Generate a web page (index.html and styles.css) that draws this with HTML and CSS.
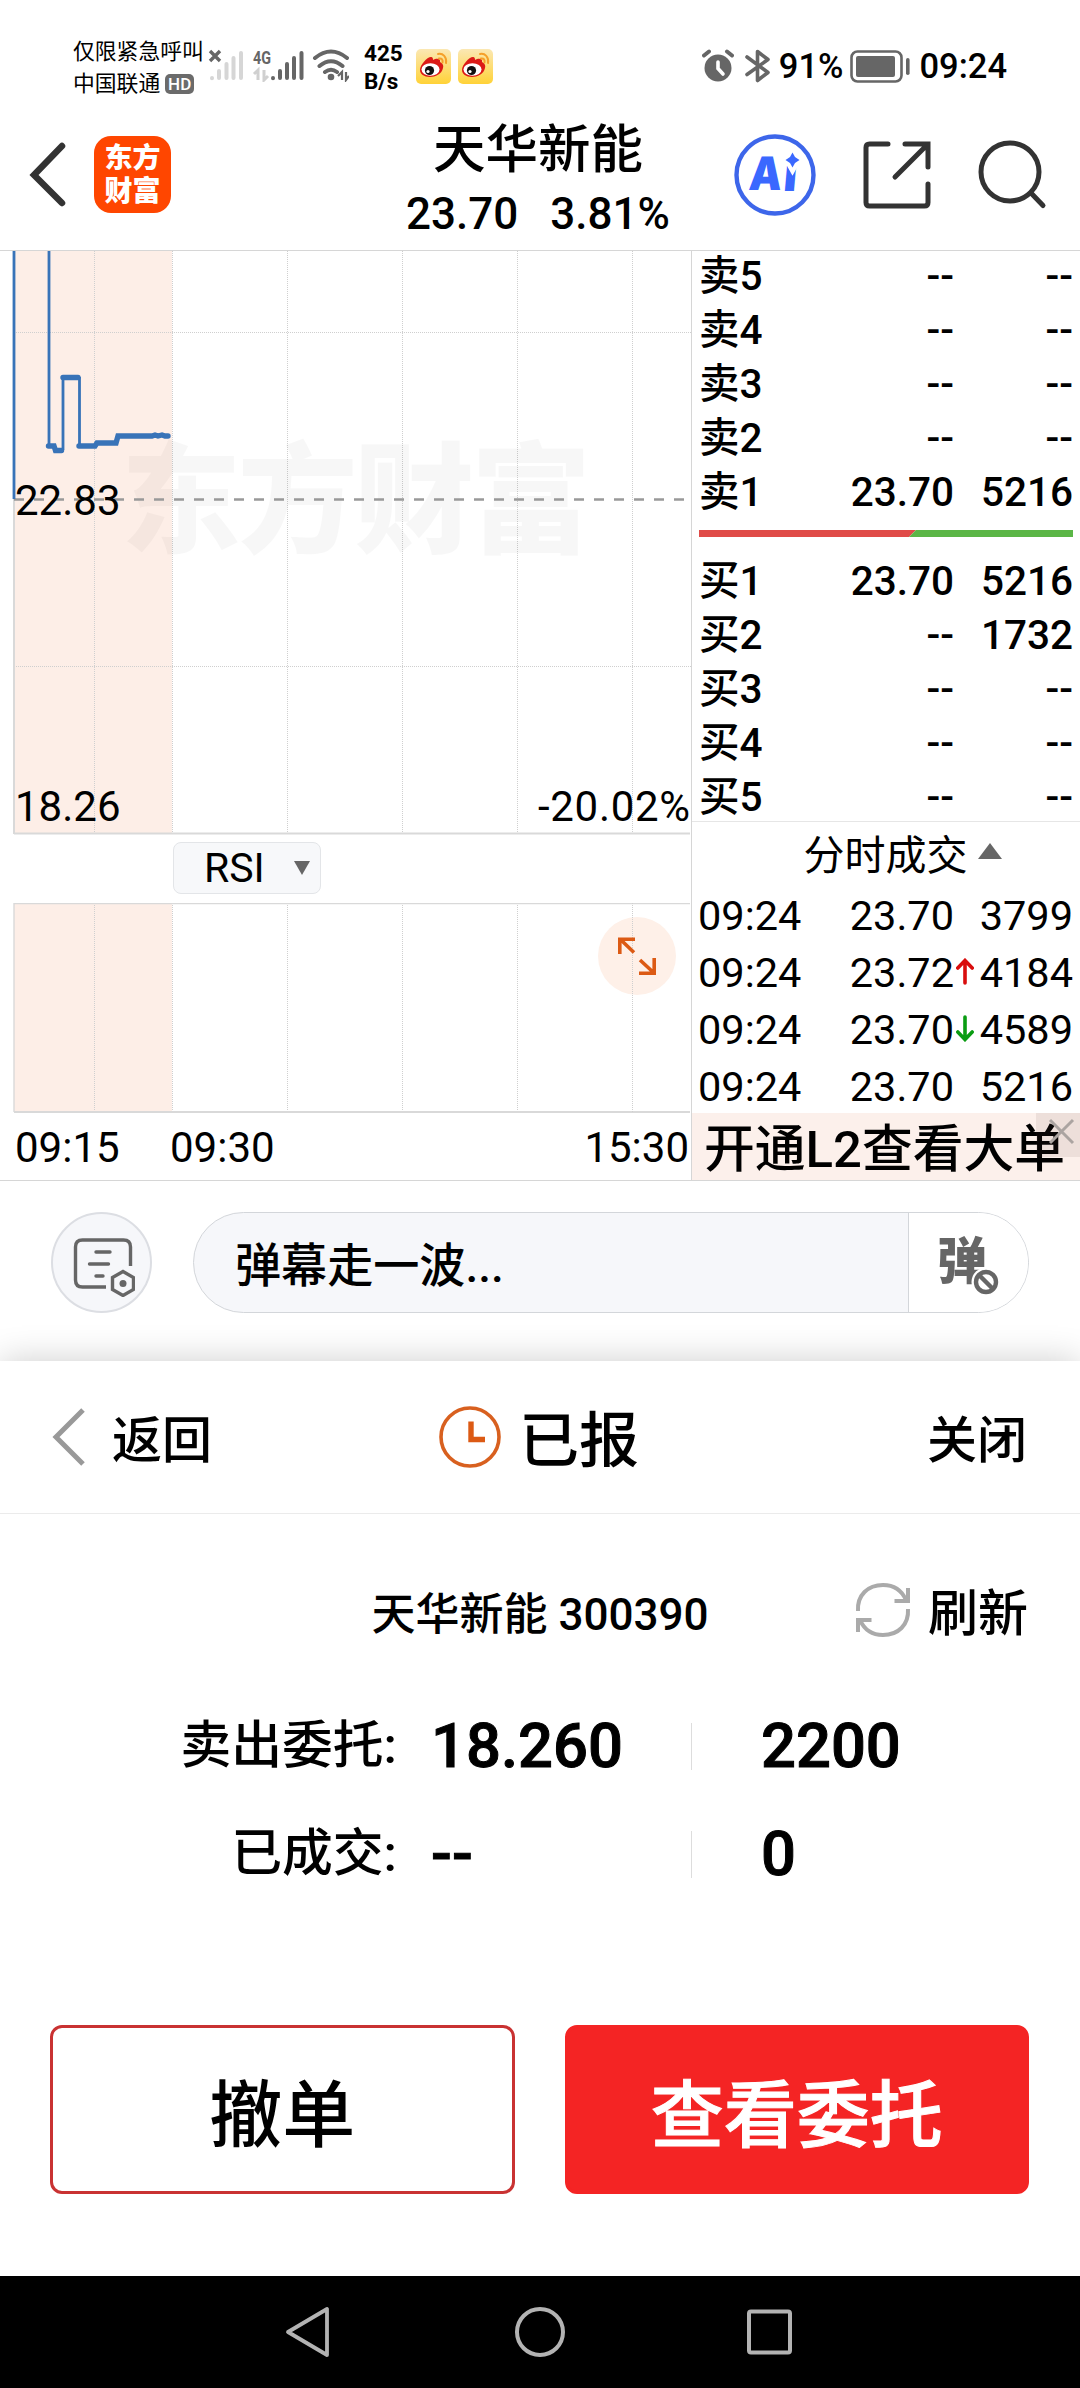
FILE: index.html
```
<!doctype html>
<html lang="zh-CN">
  <head>
    <meta charset="UTF-8" />
    <title>天华新能 300390</title>
    <link rel="stylesheet" href="styles.css">
  </head>
  <body>
    <!-- status bar -->
    <div class="status-bar">
      <div class="carrier">
        <p>仅限紧急呼叫</p>
        <p>中国联通<span class="hd">HD</span></p>
      </div>
      <svg class="signals" width="144" height="34" viewBox="0 0 144 34">
        <g stroke="#666" stroke-width="3.4">
          <path d="M5 3l10 10M15 3L5 13"/>
        </g>
        <g stroke="#d6d6d6" stroke-width="4" stroke-linecap="round">
          <path d="M7 30v.2M14 23v7M21.500 16v14M28.500 10v20M36 5v25"/>
        </g>
        <text x="48" y="16" class="net" textLength="18" lengthAdjust="spacingAndGlyphs">4G</text>
        <path d="M49 26l4-4v10M59 22v10l4-4" fill="none" stroke="#d0d0d0" stroke-width="3"/>
        <g stroke="#666" stroke-width="4" stroke-linecap="round">
          <path d="M68 30v.2M75 23v7M82 16v14M89 10v20M96.500 5v25"/>
        </g>
        <g fill="none" stroke="#666" stroke-width="4" stroke-linecap="round">
          <path d="M110 10q16-13 32 0M114.500 18q11.500-9.500 23 0M120 24q6-4.500 12 0"/>
        </g>
        <circle cx="126" cy="29" r="3.300" fill="#666"/>
        <path d="M133 28l4-4v8M141 24v8l3-4" fill="none" stroke="#666" stroke-width="2.200"/>
      </svg>
      <div class="speed"><p>425</p><p>B/s</p></div>
      <svg class="weibo" width="35" height="35" viewBox="0 0 35 35">
        <defs>
          <linearGradient id="wb" x1="0" y1="0" x2="0" y2="1">
            <stop offset="0" stop-color="#fbe8b4"/><stop offset="1" stop-color="#ffd237"/>
          </linearGradient>
        </defs>
        <rect width="35" height="35" rx="5" fill="url(#wb)"/>
        <path d="M4 21c0-5 7-13 11-13 2 0 2 2 2 3 3-2 8-2 7 2 2 1 4 3 3 6-1 6-8 9-13 9-6 0-10-3-10-7z" fill="#dc1a16"/>
        <ellipse cx="14.500" cy="20.500" rx="9" ry="6.200" fill="#fff"/>
        <circle cx="13.500" cy="21.500" r="4.600" fill="#111"/>
        <circle cx="12" cy="22.500" r="1.600" fill="#fff"/>
        <path d="M22 5c5-1 9 3 8 9M23 9.500c3-.5 4 1.500 3.500 4" fill="none" stroke="#f5a02a" stroke-width="2" stroke-linecap="round"/>
      </svg>
      <svg class="weibo" width="35" height="35" viewBox="0 0 35 35">
        <rect width="35" height="35" rx="5" fill="url(#wb)"/>
        <path d="M4 21c0-5 7-13 11-13 2 0 2 2 2 3 3-2 8-2 7 2 2 1 4 3 3 6-1 6-8 9-13 9-6 0-10-3-10-7z" fill="#dc1a16"/>
        <ellipse cx="14.500" cy="20.500" rx="9" ry="6.200" fill="#fff"/>
        <circle cx="13.500" cy="21.500" r="4.600" fill="#111"/>
        <circle cx="12" cy="22.500" r="1.600" fill="#fff"/>
        <path d="M22 5c5-1 9 3 8 9M23 9.500c3-.5 4 1.500 3.500 4" fill="none" stroke="#f5a02a" stroke-width="2" stroke-linecap="round"/>
      </svg>
      <div class="status-right">
        <svg width="32" height="34" viewBox="0 0 32 34">
          <circle cx="16" cy="19" r="13.500" fill="#666"/>
          <path d="M2 6.500l5-4M30 6.500l-5-4" stroke="#666" stroke-width="4" stroke-linecap="round"/>
          <path d="M16 13v6.500l5 5.500" fill="none" stroke="#fff" stroke-width="3.600" stroke-linecap="round"/>
        </svg>
        <svg class="bt" width="26" height="34" viewBox="0 0 26 34">
          <path d="M2 8l21 15.500-10.500 8v-29l10.500 8L2 25.500" fill="none" stroke="#666" stroke-width="3.600" stroke-linecap="round" stroke-linejoin="round"/>
        </svg>
        <span class="percent">91%</span>
        <svg class="battery" width="60" height="33" viewBox="0 0 60 33">
          <rect x="1.500" y="1.500" width="50" height="30" rx="6" fill="none" stroke="#666" stroke-width="2.600"/>
          <rect x="6" y="6" width="39" height="21" rx="2" fill="#666"/>
          <rect x="56" y="8" width="3.600" height="17" rx="1.800" fill="#666"/>
        </svg>
        <span>09:24</span>
      </div>
    </div>

    <!-- stock header -->
    <div class="header">
      <div class="header-left">
        <svg width="40" height="66" viewBox="0 0 40 66">
          <path d="M34 4L6 33l28 28" fill="none" stroke="#333" stroke-width="6.500" stroke-linecap="round"/>
        </svg>
        <div class="logo"><span>东方</span><span>财富</span></div>
      </div>
      <div class="stock">
        <div class="stock-name">天华新能</div>
        <div class="stock-price"><span>23.70</span><span>3.81%</span></div>
      </div>
      <div class="actions">
        <svg width="82" height="82" viewBox="0 0 82 82">
          <circle cx="41" cy="41" r="38.500" fill="none" stroke="#3d66ea" stroke-width="4.400"/>
          <g transform="translate(0 56) skewX(-5)">
            <text x="14" y="0" class="ai" textLength="33" lengthAdjust="spacingAndGlyphs">A</text>
            <text x="48.500" y="1" class="ai">i</text>
          </g>
          <path d="M58.500 18.500l2.500 4.500 4.500 3-4.500 3-2.500 4.500-2.500-4.500-4.500-3 4.500-3z" fill="#3a68ff" stroke="#fff" stroke-width="8" paint-order="stroke"/>
        </svg>
        <svg width="68" height="68" viewBox="0 0 68 68">
          <path d="M25 3H6.500Q3 3 3 6.500v55Q3 65 6.500 65h55Q65 65 65 61.500V43M42 3h23v23M64 4L32 36" fill="none" stroke="#333" stroke-width="5" stroke-linecap="round"/>
        </svg>
        <svg width="70" height="70" viewBox="0 0 70 70">
          <circle cx="32" cy="32" r="29" fill="none" stroke="#333" stroke-width="5"/>
          <path d="M53 53l12 12.500" stroke="#333" stroke-width="5" stroke-linecap="round"/>
        </svg>
      </div>
    </div>

    <!-- chart and order book -->
    <div class="market">
      <div class="chart">
        <svg width="691" height="584" viewBox="0 251 691 584">
          <rect x="14" y="251" width="158" height="582" class="pre"/>
          <g class="grid">
            <path d="M94.500 251v582M172.500 251v582M287.500 251v582M402.500 251v582M517.500 251v582M632.500 251v582"/>
            <path d="M14 332.500h677M14 666.500h677"/>
          </g>
          <text x="121" y="544" class="watermark" textLength="470">东方财富</text>
          <path d="M14 251v583" class="axis"/>
          <path d="M14 833.500h676" class="axis"/>
          <path d="M14 499.500h676" class="mid"/>
          <path d="M14 251v248M49 251v195M63 450V377M79.500 377v69" class="line"/>
          <path d="M48.500 446h5.500l1.500 4.500h6M63 377.500h15M79 446h16l2-3h19l2-7h34l3-1 3 1 4-1 3 1h3" class="line dots"/>
          <text x="15" y="515" class="label">22.83</text>
          <text x="15" y="821" class="label">18.26</text>
          <text x="690" y="821" class="label" text-anchor="end" textLength="152">-20.02%</text>
        </svg>
        <div class="indicator">
          <div class="select">RSI<i class="caret"></i></div>
        </div>
        <svg width="691" height="211" viewBox="0 903 691 211">
          <rect x="14" y="903" width="158" height="209" class="pre"/>
          <g class="grid">
            <path d="M94.500 903v209M172.500 903v209M287.500 903v209M402.500 903v209M517.500 903v209"/>
          </g>
          <path d="M14 903v209M14 903.500h676" class="axis thin"/>
          <path d="M14 1112h676" class="axis"/>
          <circle cx="637" cy="956" r="39" fill="#fef0e8"/>
          <path d="M632.500 903v209" class="grid"/>
          <g fill="none" stroke="#dc5a14" stroke-width="3.600">
            <path d="M634 952.500L620 939M635 939.200h-15.200V954M640 960l14 13M639 973.200h15.200V958"/>
          </g>
        </svg>
        <div class="times"><span>09:15</span><span>09:30</span><span class="end">15:30</span></div>
      </div>

      <div class="book">
        <div class="asks">
          <div class="row"><span>卖5</span><span>--</span><span>--</span></div>
          <div class="row"><span>卖4</span><span>--</span><span>--</span></div>
          <div class="row"><span>卖3</span><span>--</span><span>--</span></div>
          <div class="row"><span>卖2</span><span>--</span><span>--</span></div>
          <div class="row"><span>卖1</span><span>23.70</span><span>5216</span></div>
        </div>
        <svg class="ratio" width="374" height="7" viewBox="0 0 374 7">
          <path d="M0 0h217l-7 7H0z" fill="#e04b48"/>
          <path d="M217 0h157v7H210z" fill="#5bb646"/>
        </svg>
        <div class="bids">
          <div class="row"><span>买1</span><span>23.70</span><span>5216</span></div>
          <div class="row"><span>买2</span><span>--</span><span>1732</span></div>
          <div class="row"><span>买3</span><span>--</span><span>--</span></div>
          <div class="row"><span>买4</span><span>--</span><span>--</span></div>
          <div class="row"><span>买5</span><span>--</span><span>--</span></div>
        </div>
        <div class="ticks-title">分时成交<i class="caret-up"></i></div>
        <div class="ticks">
          <div class="tick"><span>09:24</span><span>23.70</span><i></i><span>3799</span></div>
          <div class="tick">
            <span>09:24</span><span>23.72</span>
            <svg width="18" height="27" viewBox="0 0 18 27"><path d="M9 25V3M1.800 10L9 2.500l7.200 7.500" fill="none" stroke="#d90d0d" stroke-width="3.600" stroke-linecap="round"/></svg>
            <span>4184</span>
          </div>
          <div class="tick">
            <span>09:24</span><span>23.70</span>
            <svg width="18" height="27" viewBox="0 0 18 27"><path d="M9 2v22M1.800 17L9 24.500l7.200-7.500" fill="none" stroke="#0a9c12" stroke-width="3.600" stroke-linecap="round"/></svg>
            <span>4589</span>
          </div>
          <div class="tick"><span>09:24</span><span>23.70</span><i></i><span>5216</span></div>
        </div>
        <div class="banner">
          开通L2查看大单
          <svg class="banner-close" width="44" height="44" viewBox="0 0 44 44">
            <path d="M14 7l23 23M37 7L14 30" stroke="#aba4a1" stroke-width="3"/>
          </svg>
        </div>
      </div>
    </div>

    <!-- danmu input -->
    <div class="danmu">
      <div class="danmu-set">
        <svg width="62" height="60" viewBox="0 0 62 60">
          <g fill="none" stroke="#666" stroke-width="3.400">
            <path d="M33 50H9.500Q2.500 50 2.500 43V10Q2.500 3 9.500 3h41Q57.500 3 57.500 10v19"/>
            <path d="M23 15h14M16.500 27h19M23 39h7" stroke-linecap="round"/>
            <path d="M50 34.500l10.500 6v12L50 58.500l-10.500-6v-12z"/>
          </g>
          <circle cx="50" cy="46.500" r="3.500" fill="#666"/>
        </svg>
      </div>
      <div class="danmu-box">
        <div class="danmu-text">弹幕走一波...</div>
        <div class="danmu-off">
          <span>弹</span>
          <svg width="30" height="30" viewBox="0 0 30 30">
            <circle cx="15" cy="15" r="14.500" fill="#fff"/>
            <circle cx="15" cy="15" r="10" fill="#fff" stroke="#666" stroke-width="4.400"/>
            <path d="M8 8l14 14" stroke="#666" stroke-width="4.400"/>
          </svg>
        </div>
      </div>
    </div>

    <!-- order sheet -->
    <div class="sheet">
      <div class="sheet-head">
        <div class="sheet-back">
          <svg width="36" height="60" viewBox="0 0 36 60">
            <path d="M32 3L5 30l27 27" fill="none" stroke="#999" stroke-width="5"/>
          </svg>
          <span>返回</span>
        </div>
        <div class="sheet-title">
          <svg width="62" height="62" viewBox="0 0 62 62">
            <circle cx="31" cy="31" r="29" fill="none" stroke="#d8601f" stroke-width="3.600"/>
            <path d="M32 15.500v18h14" fill="none" stroke="#dc5a14" stroke-width="5.400"/>
          </svg>
          <span>已报</span>
        </div>
        <span class="sheet-close">关闭</span>
      </div>
      <div class="sheet-stock">
        <span class="code">天华新能 300390</span>
        <div class="refresh">
          <svg width="56" height="56" viewBox="0 0 56 56">
            <g fill="none" stroke="#aaa" stroke-width="4">
              <path d="M3 29C2 13 13 3 28 3c11 0 19 6 23 15M39.500 19H53V6"/>
              <path d="M53 27c1 16-10 26-25 26C17 53 9 47 5 38M16.500 38H3v12"/>
            </g>
          </svg>
          <span>刷新</span>
        </div>
      </div>
      <div class="detail">
        <span class="name">卖出委托:</span><b>18.260</b><i></i><b>2200</b>
      </div>
      <div class="detail">
        <span class="name">已成交:</span><b>--</b><i></i><b>0</b>
      </div>
      <div class="buttons">
        <button class="cancel">撤单</button>
        <button class="view">查看委托</button>
      </div>
    </div>

    <!-- system navigation -->
    <div class="nav">
      <svg width="50" height="54" viewBox="0 0 50 54">
        <path d="M43 4v46L4 27z" fill="none" stroke="#b3b3b3" stroke-width="3.800" stroke-linejoin="round"/>
      </svg>
      <svg width="54" height="54" viewBox="0 0 54 54">
        <circle cx="27" cy="27" r="23" fill="none" stroke="#b3b3b3" stroke-width="4"/>
      </svg>
      <svg width="50" height="54" viewBox="0 0 50 54">
        <rect x="3" y="6.500" width="41" height="41" rx="2" fill="none" stroke="#b3b3b3" stroke-width="4"/>
      </svg>
    </div>
  </body>
</html>
```
FILE: styles.css
```
* {
  box-sizing: border-box;
}
body {
  margin: 0;
  width: 1080px;
  height: 2388px;
  display: flex;
  flex-direction: column;
  overflow: hidden;
  background: #fff;
  color: #000;
  font-family: Roboto, "Noto Sans CJK SC", sans-serif;
  font-weight: 500;
}
p {
  margin: 0;
}
svg {
  display: block;
  flex: none;
}

/* status bar */
.status-bar {
  height: 125px;
  padding: 0 73px 0 73px;
  display: flex;
  align-items: flex-start;
}
.carrier {
  width: 132px;
  padding-top: 36px;
  font-size: 21.8px;
  font-weight: 400;
  line-height: 32px;
  white-space: nowrap;
}
.carrier p {
  display: flex;
  align-items: center;
}
.hd {
  width: 29px;
  height: 20px;
  margin-left: 5px;
  border-radius: 5px;
  background: #6b6b6b;
  color: #fff;
  font-size: 17px;
  font-weight: 500;
  line-height: 20px;
  text-align: center;
}
.signals {
  margin: 48px 4px 0 0;
}
.net {
  font-size: 19px;
  font-weight: 700;
  fill: #666;
}
.speed {
  width: 53px;
  padding: 40px 0 0 11px;
  font-size: 22.5px;
  line-height: 27.5px;
  font-weight: 700;
}
.weibo {
  margin: 49px 0 0 10px;
}
.weibo + .weibo {
  margin-left: 7px;
}
.status-right {
  margin-left: auto;
  padding-top: 49px;
  display: flex;
  align-items: center;
  font-size: 34.5px;
  line-height: 34px;
}
.bt {
  margin: 0 8px 0 11px;
}
.battery {
  margin: 0 9px 0 7px;
}

/* stock header */
.header {
  height: 125px;
  padding: 0 32px 0 28px;
  display: grid;
  grid-template-columns: 1fr 270px 1fr;
  align-items: start;
}
.header-left {
  display: flex;
  align-items: center;
  gap: 26px;
  padding-top: 11px;
}
.logo {
  width: 77px;
  height: 77px;
  padding-top: 6px;
  border-radius: 17px;
  background: #ff4600;
  color: #fff;
  font-size: 28px;
  font-weight: 900;
  line-height: 33px;
  text-align: center;
}
.logo span {
  display: block;
}
.stock {
  text-align: center;
}
.stock-name {
  margin-top: -6px;
  font-size: 52.5px;
  line-height: 62px;
}
.stock-price {
  display: flex;
  justify-content: center;
  gap: 32px;
  margin-top: 7px;
  font-size: 44px;
  line-height: 52px;
}
.actions {
  display: flex;
  justify-content: flex-end;
  align-items: center;
  gap: 47px;
  margin-top: 9px;
}
.ai {
  font-family: Inter, Roboto, sans-serif;
  font-size: 46px;
  font-weight: 900;
  fill: #3a68ff;
}

/* chart */
.market {
  height: 931px;
  display: flex;
  border-top: 1px solid #d6d6d6;
  border-bottom: 1px solid #d6d6d6;
}
.chart {
  width: 691px;
}
.pre {
  fill: #fdeee7;
}
.grid {
  fill: none;
  stroke: #cfcfcf;
  stroke-width: 1;
  stroke-dasharray: 1 1;
}
.axis {
  stroke: #d9d9d9;
  stroke-width: 2;
}
.thin {
  stroke-width: 1.4;
  fill: none;
}
.mid {
  stroke: #999;
  stroke-width: 2.4;
  stroke-dasharray: 10 10;
}
.line {
  fill: none;
  stroke: #3873b8;
  stroke-width: 2.8;
}
.dots {
  stroke-width: 5.4;
  stroke-linecap: round;
}
.label {
  font-size: 42px;
  font-weight: 400;
}
.watermark {
  font-size: 120px;
  font-weight: 900;
  fill: rgba(0, 0, 0, 0.03);
}
.indicator {
  height: 68px;
  padding: 7px 0 0 173px;
}
.select {
  width: 148px;
  height: 52px;
  padding-left: 30px;
  border: 1px solid #e3e5e8;
  border-radius: 8px;
  background: #f7f8fa;
  display: flex;
  align-items: center;
  font-size: 41px;
  font-weight: 400;
  line-height: 50px;
}
.caret {
  margin-left: 29px;
  border: solid transparent;
  border-width: 14px 8.5px 0;
  border-top-color: #666;
}
.times {
  display: flex;
  padding: 9px 2px 0 15px;
  font-size: 42px;
  font-weight: 400;
  line-height: 50px;
}
.times span {
  width: 155px;
}
.times .end {
  width: auto;
  margin-left: auto;
}

/* order book */
.book {
  flex: 1;
  border-left: 1px solid #d6d6d6;
}
.asks {
  margin-top: -2px;
}
.row {
  height: 54px;
  padding: 0 7px 0 7px;
  display: grid;
  grid-template-columns: 90px 1fr 119px;
  font-size: 40.5px;
  line-height: 54px;
}
.row span ~ span,
.tick span ~ span {
  text-align: right;
}
.ratio {
  margin: 11px 0 17px 7px;
}
.bids {
  margin-bottom: -3px;
}
.ticks-title {
  height: 66px;
  border-top: 1px solid #e6e6e6;
  display: flex;
  justify-content: center;
  align-items: center;
  padding: 0 0 5px 33px;
  font-size: 41px;
  font-weight: 400;
}
.caret-up {
  margin: -3px 0 0 10px;
  border: solid transparent;
  border-width: 0 12px 16px;
  border-bottom-color: #666;
}
.tick {
  height: 57px;
  padding: 0 7px 0 6px;
  display: grid;
  grid-template-columns: 104px 1fr 22px 97px;
  align-items: center;
  font-size: 41.5px;
  font-weight: 400;
  line-height: 57px;
}
.tick svg {
  margin: 0 0 2px 2px;
}
.banner {
  position: relative;
  height: 67px;
  margin-top: -2px;
  padding: 4px 0 0 12px;
  background: #fcf0eb;
  font-size: 50.8px;
  line-height: 66px;
  white-space: nowrap;
}
.banner-close {
  position: absolute;
  top: 0;
  right: 0;
  background: rgba(90, 60, 50, 0.09);
}

/* danmu input */
.danmu {
  height: 180px;
  padding: 31px 51px 0;
  display: flex;
  gap: 41px;
}
.danmu-set {
  width: 101px;
  height: 101px;
  padding: 23px 0 0 20px;
  border: 2px solid #dcdee3;
  border-radius: 50%;
  background: #f6f7fa;
}
.danmu-box {
  flex: 1;
  height: 101px;
  display: flex;
  overflow: hidden;
  border: 1px solid #d3d6da;
  border-radius: 51px;
  background: #f6f7fa;
}
.danmu-text {
  width: 714px;
  padding: 3px 0 0 41px;
  font-size: 46.1px;
  line-height: 100px;
}
.danmu-off {
  flex: 1;
  position: relative;
  padding-left: 28px;
  border-left: 1px solid #d3d6da;
  background: #fff;
  color: #666;
  font-size: 50px;
  font-weight: 900;
  line-height: 98px;
}
.danmu-off svg {
  position: absolute;
  left: 62px;
  top: 54px;
}

/* order sheet */
.sheet {
  position: relative;
  height: 915px;
  background: #fff;
  box-shadow: 0 0 34px rgba(0, 0, 0, 0.2);
}
.sheet-head {
  height: 153px;
  padding: 0 53px 0 51px;
  display: grid;
  grid-template-columns: 1fr auto 1fr;
  align-items: center;
  border-bottom: 1px solid #ebebeb;
  font-size: 50px;
  line-height: 60px;
}
.sheet-head span {
  padding-top: 8px;
}
.sheet-back {
  display: flex;
  align-items: center;
  gap: 25px;
}
.sheet-title {
  display: flex;
  align-items: center;
  gap: 18px;
  font-size: 60px;
}
.sheet-title span {
  padding-top: 10px;
}
.sheet-close {
  justify-self: end;
}
.sheet-stock {
  height: 178px;
  padding: 18px 52px 0;
  display: grid;
  grid-template-columns: 1fr auto 1fr;
  align-items: center;
  font-size: 50px;
}
.code {
  grid-column: 2;
  margin-top: -2px;
  font-size: 44px;
}
.refresh {
  justify-self: end;
  margin-top: -5px;
  display: flex;
  align-items: center;
  gap: 17px;
}
.refresh span {
  margin-top: -2px;
}
.detail {
  height: 108px;
  display: grid;
  grid-template-columns: 397px 294px 70px auto;
  align-items: center;
  font-size: 50.8px;
  line-height: 108px;
}
.detail .name {
  text-align: right;
}
.detail b {
  padding-left: 34px;
  font-size: 61.5px;
  font-weight: 500;
  -webkit-text-stroke: 1px #000;
}
.detail i {
  width: 1px;
  height: 47px;
  background: #ddd;
}
.detail i + b {
  padding-left: 0;
}
.buttons {
  padding: 117px 51px 0 50px;
  display: flex;
  gap: 50px;
}
button {
  flex: 1;
  height: 169px;
  padding: 0 0 2px;
  border: 3px solid #c93232;
  border-radius: 12px;
  background: #fff;
  color: #000;
  font: inherit;
  font-size: 73px;
}
.view {
  border-color: #f42424;
  background: #f42424;
  color: #fff;
  -webkit-text-stroke: 1px #fff;
}

/* system navigation */
.nav {
  flex: 1;
  display: flex;
  justify-content: center;
  gap: 179px;
  padding-top: 29px;
  background: #000;
}
```
